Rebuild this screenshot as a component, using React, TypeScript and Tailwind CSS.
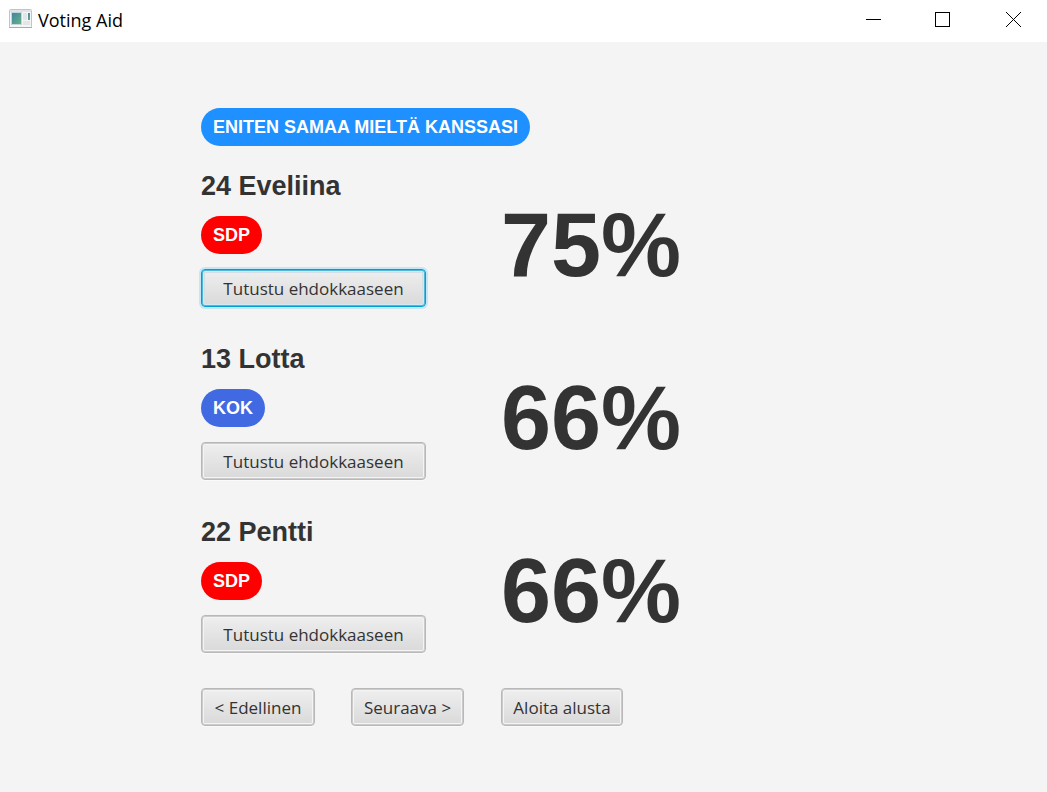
import type { ReactNode } from "react";

type Candidate = {
  number: number;
  name: string;
  party: string;
  partyClass: string;
  match: number;
  active?: boolean;
};

const candidates: Candidate[] = [
  { number: 24, name: "Eveliina", party: "SDP", partyClass: "bg-[#ff0000]", match: 75, active: true },
  { number: 13, name: "Lotta", party: "KOK", partyClass: "bg-[#4169e1]", match: 66 },
  { number: 22, name: "Pentti", party: "SDP", partyClass: "bg-[#ff0000]", match: 66 },
];

function Badge({ color, children }: { color: string; children: ReactNode }) {
  return (
    <span
      className={`${color} inline-flex h-[38px] items-center rounded-full px-3 text-[18px] font-bold whitespace-nowrap text-white`}
    >
      {children}
    </span>
  );
}

function Button({
  active = false,
  className = "",
  children,
}: {
  active?: boolean;
  className?: string;
  children: ReactNode;
}) {
  const edge = active
    ? "border-[#039ed3] shadow-[0_0_0_2px_#c5e6f2,inset_0_0_0_1px_#4fb9dd,inset_0_0_0_2px_#d3e8f0,inset_0_0_0_3px_#d2e0e5]"
    : "border-[#b8b8b8] shadow-[inset_0_0_0_1px_#cbcbcb,inset_0_0_0_2px_#f4f4f4,0_1px_0_#fafafa]";
  return (
    <button
      type="button"
      className={`${edge} ${className} flex h-[38px] items-center justify-center rounded-[4px] border bg-linear-to-b from-[#efefef] to-[#d9d9d9] pt-0.5 font-['Open_Sans','Noto_Sans',sans-serif] text-[17px] whitespace-nowrap text-[#333333] outline-none`}
    >
      {children}
    </button>
  );
}

function TitleBar() {
  return (
    <header className="flex h-[42px] shrink-0 items-start justify-between bg-white">
      <div className="flex h-10 items-center gap-1.5 pl-[9px]">
        <svg width="23" height="22" viewBox="0 0 23 22" aria-hidden="true">
          <defs>
            <linearGradient id="pane" x1="0" y1="0" x2="1" y2="1">
              <stop offset="0" stopColor="#4680a6" />
              <stop offset="1" stopColor="#62b583" />
            </linearGradient>
          </defs>
          <rect x="0.5" y="0.5" width="22" height="18" rx="1" fill="#f4f5f6" stroke="#bcc4cf" />
          <rect x="1" y="1" width="21" height="2" fill="#dfe3e8" />
          <rect x="0" y="18" width="23" height="1" fill="#a3abb6" />
          <rect x="2.5" y="3.5" width="10" height="12" fill="url(#pane)" stroke="#c3d6d8" />
          <rect x="14" y="4" width="4" height="7" fill="#e4e5e7" />
          <rect x="14" y="12" width="7" height="4" fill="#e4e5e7" />
          <rect x="19" y="4" width="2" height="7" fill="url(#pane)" />
        </svg>
        <span className="font-['Open_Sans','Noto_Sans',sans-serif] text-[18px] text-black">Voting Aid</span>
      </div>
      <div className="flex h-[39px]">
        <button type="button" aria-label="Minimize" className="mr-0.5 flex w-[67px] items-center justify-center">
          <svg width="15" height="15" viewBox="0 0 15 15" aria-hidden="true">
            <rect y="7" width="15" height="1" fill="#000" />
          </svg>
        </button>
        <button type="button" aria-label="Maximize" className="mr-1 flex w-[67px] items-center justify-center">
          <svg width="15" height="15" viewBox="0 0 15 15" aria-hidden="true">
            <rect x="0.5" y="0.5" width="14" height="14" fill="none" stroke="#000" />
          </svg>
        </button>
        <button type="button" aria-label="Close" className="flex w-[67px] items-center justify-center">
          <svg width="15" height="15" viewBox="0 0 15 15" aria-hidden="true">
            <path d="M0 0L15 15M15 0L0 15" fill="none" stroke="#000" />
          </svg>
        </button>
      </div>
    </header>
  );
}

export default function App() {
  return (
    <div className="flex min-h-screen flex-col bg-[#f4f4f4] font-['Liberation_Sans',Arial,sans-serif] text-[#333333]">
      <TitleBar />
      <main className="flex grow flex-col pt-[66px] pb-10 pl-[201px]">
        <h1 className="mb-[25px] flex">
          <Badge color="bg-[#1e90ff]">ENITEN SAMAA MIELTÄ KANSSASI</Badge>
        </h1>
        <ul className="flex flex-col gap-[37px]">
          {candidates.map((c) => (
            <li key={c.number} className="grid grid-cols-[300px_auto] items-center justify-start">
              <div className="flex flex-col items-start gap-[15px]">
                <h2 className="text-[27px] leading-[30px] font-bold">
                  {c.number} {c.name}
                </h2>
                <Badge color={c.partyClass}>{c.party}</Badge>
                <Button active={c.active} className="w-[225px]">
                  Tutustu ehdokkaaseen
                </Button>
              </div>
              <p className="pt-[11px] text-[90px] leading-[90px] font-bold">{c.match}%</p>
            </li>
          ))}
        </ul>
        <nav className="mt-[35px] grid grid-cols-[150px_150px_auto] justify-start">
          <Button className="w-[114px]">&lt; Edellinen</Button>
          <Button className="w-[113px]">Seuraava &gt;</Button>
          <Button className="w-[122px]">Aloita alusta</Button>
        </nav>
      </main>
    </div>
  );
}
